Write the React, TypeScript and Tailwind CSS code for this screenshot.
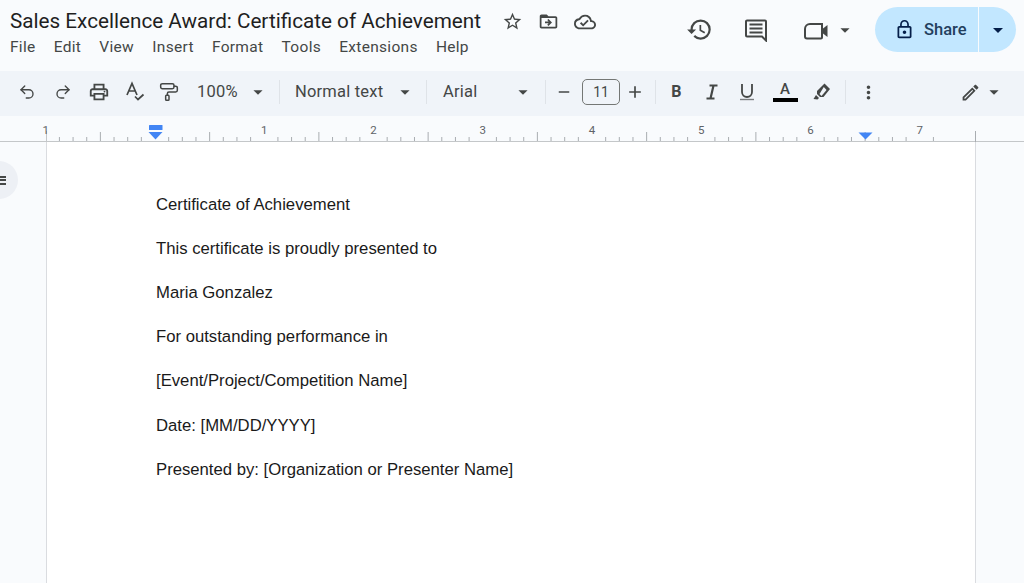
import {
  MdAdd,
  MdArrowDropDown,
  MdDriveFileMoveOutline,
  MdHistory,
  MdLockOutline,
  MdMoreVert,
  MdOutlineCloudDone,
  MdOutlineEdit,
  MdOutlinePrint,
  MdOutlineStarBorder,
  MdRemove,
} from "react-icons/md";
import { PaintRoller, Redo2, Undo2 } from "lucide-react";

const menus = ["File", "Edit", "View", "Insert", "Format", "Tools", "Extensions", "Help"];

const lines = [
  "Certificate of Achievement",
  "This certificate is proudly presented to",
  "Maria Gonzalez",
  "For outstanding performance in",
  "[Event/Project/Competition Name]",
  "Date: [MM/DD/YYYY]",
  "Presented by: [Organization or Presenter Name]",
];

const INCH = 109.25;
const ZERO = 155;

const Sep = () => <div className="h-[24px] w-px shrink-0 bg-[#dfe3e8]" />;

const SpellIcon = () => (
  <svg width="22" height="22" viewBox="0 0 22 22" fill="none" stroke="#444746" strokeWidth="1.7">
    <path d="M3 14 8 2.5 13 14M4.8 10h6.4" />
    <path d="m11 15.5 3 3 5.5-5" />
  </svg>
);

const ItalicIcon = () => (
  <svg width="20" height="20" viewBox="0 0 20 20" fill="none" stroke="#444746" strokeWidth="2.2">
    <path d="M7.5 3.5h8M4.5 16.5h8M11.5 3.5l-3 13" />
  </svg>
);

const UnderlineIcon = () => (
  <svg width="20" height="20" viewBox="0 0 20 20" fill="none" stroke="#444746" strokeWidth="1.8">
    <path d="M5 2v8a5 5 0 0 0 10 0V2" />
    <path d="M3 17.5h14" strokeWidth="1.4" stroke="#7a7d80" />
  </svg>
);

const MarkerIcon = () => (
  <svg width="20" height="20" viewBox="0 0 20 20" fill="#444746">
    <path d="M12.5 1.5 18 7l-6.5 8H8l-3-3v-3z" />
    <path d="M4 13l3 3-1.5 1.5-4-.5z" />
    <path d="M11.8 5 14.5 8l-5 6-2-2z" fill="#f0f4f9" />
  </svg>
);

const CommentIcon = () => (
  <svg width="24" height="24" viewBox="0 0 24 24" fill="none" stroke="#444746">
    <path d="M3 2.5h18a1 1 0 0 1 1 1v19l-4-4H3a1 1 0 0 1-1-1v-14a1 1 0 0 1 1-1z" strokeWidth="2" />
    <path d="M5.5 6.5h13M5.5 10.5h13M5.5 14.5h13" strokeWidth="1.8" />
  </svg>
);

const VideoIcon = () => (
  <svg width="24" height="18" viewBox="0 0 24 18" fill="none" stroke="#444746" strokeWidth="2">
    <path d="M6 2h12v13.5a1 1 0 0 1-1 1H3a2 2 0 0 1-2-2V7a5 5 0 0 1 5-5z" />
    <path d="M19 6.5 23.5 3v12L19 11.5z" fill="#444746" stroke="none" />
  </svg>
);

const Ruler = () => {
  const ticks = [];
  for (let i = -8; i < 58; i++) {
    const x = ZERO + (i * INCH) / 8;
    const h = i % 8 === 0 ? 0 : i % 4 === 0 ? 9 : 4;
    if (h > 0 && x > 46 && x < 976) {
      ticks.push(<line key={i} x1={x} x2={x} y1={25 - h} y2={25} stroke="#a9adb1" strokeWidth="1" />);
    }
  }
  const labels = [-1, 1, 2, 3, 4, 5, 6, 7];
  return (
    <svg width="1024" height="26" viewBox="0 0 1024 26" className="block">
      <line x1="0" x2="1024" y1="25.5" y2="25.5" stroke="#c4c7c9" strokeWidth="1" />
      {ticks}
      <line x1="46.5" x2="46.5" y1="15" y2="26" stroke="#c4c7c9" />
      <line x1="975.5" x2="975.5" y1="15" y2="26" stroke="#a9adb1" />
      {labels.map((n) => (
        <text
          key={n}
          x={ZERO + n * INCH}
          y="18"
          textAnchor="middle"
          fontSize="11.5"
          fill="#5f6368"
          fontFamily="Roboto, sans-serif"
        >
          {Math.abs(n)}
        </text>
      ))}
      <rect x="149" y="9" width="13.5" height="5" rx="0.5" fill="#4285f4" />
      <path d="M148.5 16h14l-7 7.5z" fill="#4285f4" />
      <path d="M858.5 16.5h14l-7 7z" fill="#4285f4" />
    </svg>
  );
};

const App = () => {
  return (
    <div className="flex h-[583px] w-[1024px] flex-col overflow-hidden bg-[#f9fbfd] font-['Roboto',sans-serif] text-[#444746]">
      {/* title + menus */}
      <header className="flex h-[71px] shrink-0 justify-between">
        <div className="flex flex-col pl-[10px] pt-[8px]">
          <div className="flex items-center">
            <h1 className="w-[492px] text-[20.7px] leading-[27px] font-normal whitespace-nowrap text-[#1f1f1f]">
              Sales Excellence Award: Certificate of Achievement
            </h1>
            <MdOutlineStarBorder size={21} />
            <MdDriveFileMoveOutline size={21} className="ml-[15px]" />
            <MdOutlineCloudDone size={22} className="ml-[15px]" />
          </div>
          <nav className="mt-[1px] flex gap-[18.2px] text-[15.5px] leading-[22px] tracking-[0.3px]">
            {menus.map((m) => (
              <span key={m}>{m}</span>
            ))}
          </nav>
        </div>
        <div className="flex items-start pr-[8px] pt-[7px]">
          <div className="flex h-[45px] items-center">
            <MdHistory size={27} />
            <div className="ml-[31px]"><CommentIcon /></div>
            <div className="ml-[36px] mt-[2px]"><VideoIcon /></div>
            <MdArrowDropDown size={22} className="ml-[6px] mr-[19px]" />
          </div>
          <div className="flex h-[45px] w-[141px] items-center rounded-full bg-[#c2e7ff] text-[#041e49]">
            <div className="flex h-full flex-1 items-center border-r border-[#f9fbfd] pl-[19px]">
              <MdLockOutline size={21} />
              <span className="ml-[9px] pt-[1px] text-[16.5px] font-medium text-[#22405e]">Share</span>
            </div>
            <div className="flex w-[37px] justify-center">
              <MdArrowDropDown size={24} />
            </div>
          </div>
        </div>
      </header>

      {/* toolbar */}
      <div className="flex h-[45px] shrink-0 items-center bg-[#f0f4f9] pb-[3px] pl-[9px] text-[16.5px] tracking-[0.2px] text-[#444746]">
        <div className="flex w-[36px] justify-center"><Undo2 size={18} strokeWidth={1.8} /></div>
        <div className="flex w-[35px] justify-center"><Redo2 size={18} strokeWidth={1.8} /></div>
        <div className="flex w-[38px] justify-center"><MdOutlinePrint size={22} /></div>
        <div className="flex w-[34px] justify-center"><SpellIcon /></div>
        <div className="flex w-[34px] justify-center"><PaintRoller size={20} strokeWidth={1.8} /></div>
        <span className="ml-[11px] w-[50px]">100%</span>
        <MdArrowDropDown size={22} />
        <div className="w-[10px]" />
        <Sep />
        <span className="ml-[15px] w-[99px] whitespace-nowrap">Normal text</span>
        <MdArrowDropDown size={22} />
        <div className="w-[10px]" />
        <Sep />
        <span className="ml-[16px] w-[69px]">Arial</span>
        <MdArrowDropDown size={22} />
        <div className="w-[11px]" />
        <Sep />
        <div className="flex w-[36px] justify-center"><MdRemove size={18} /></div>
        <div className="flex h-[26px] w-[38px] items-center justify-center rounded-[5px] border border-[#747775] text-[14px] tracking-normal">11</div>
        <div className="flex w-[30px] justify-center"><MdAdd size={20} /></div>
        <div className="w-[5px]" />
        <Sep />
        <div className="flex w-[41px] justify-center text-[16px] font-bold">B</div>
        <div className="flex w-[30px] justify-center"><ItalicIcon /></div>
        <div className="flex w-[40px] justify-center"><UnderlineIcon /></div>
        <div className="flex w-[36px] flex-col items-center">
          <span className="text-[15px] leading-[15px] font-medium">A</span>
          <div className="mt-[1px] h-[4px] w-[25px] bg-black" />
        </div>
        <div className="flex w-[38px] justify-center"><MarkerIcon /></div>
        <div className="w-[4px]" />
        <Sep />
        <div className="flex w-[44px] justify-center"><MdMoreVert size={21} /></div>
        <div className="flex h-full flex-1 items-center justify-end pr-[19px]">
          <MdOutlineEdit size={21} />
          <MdArrowDropDown size={22} className="ml-[2px]" />
        </div>
      </div>

      <Ruler />

      {/* document area */}
      <div className="relative flex-1 pl-[46px] pr-[48px]">
        <div className="absolute -left-[20px] top-[19px] flex h-[38px] w-[38px] items-center justify-end rounded-full bg-[#edf0f5] pr-[12px]">
          <div className="flex flex-col gap-[1.5px]">
            <div className="h-[2px] w-[6px] bg-[#444746]" />
            <div className="h-[2px] w-[6px] bg-[#444746]" />
            <div className="h-[2px] w-[6px] bg-[#444746]" />
          </div>
        </div>
        <main className="flex h-full flex-col gap-[25.6px] border-x border-[#dadce0] bg-white pl-[109px] pt-[53.6px] font-['Liberation_Sans',Arial,sans-serif] text-[16.7px] leading-[18.6px] text-[#1a1a1a]">
          {lines.map((l) => (
            <p key={l}>{l}</p>
          ))}
        </main>
      </div>
    </div>
  );
};

export default App;
